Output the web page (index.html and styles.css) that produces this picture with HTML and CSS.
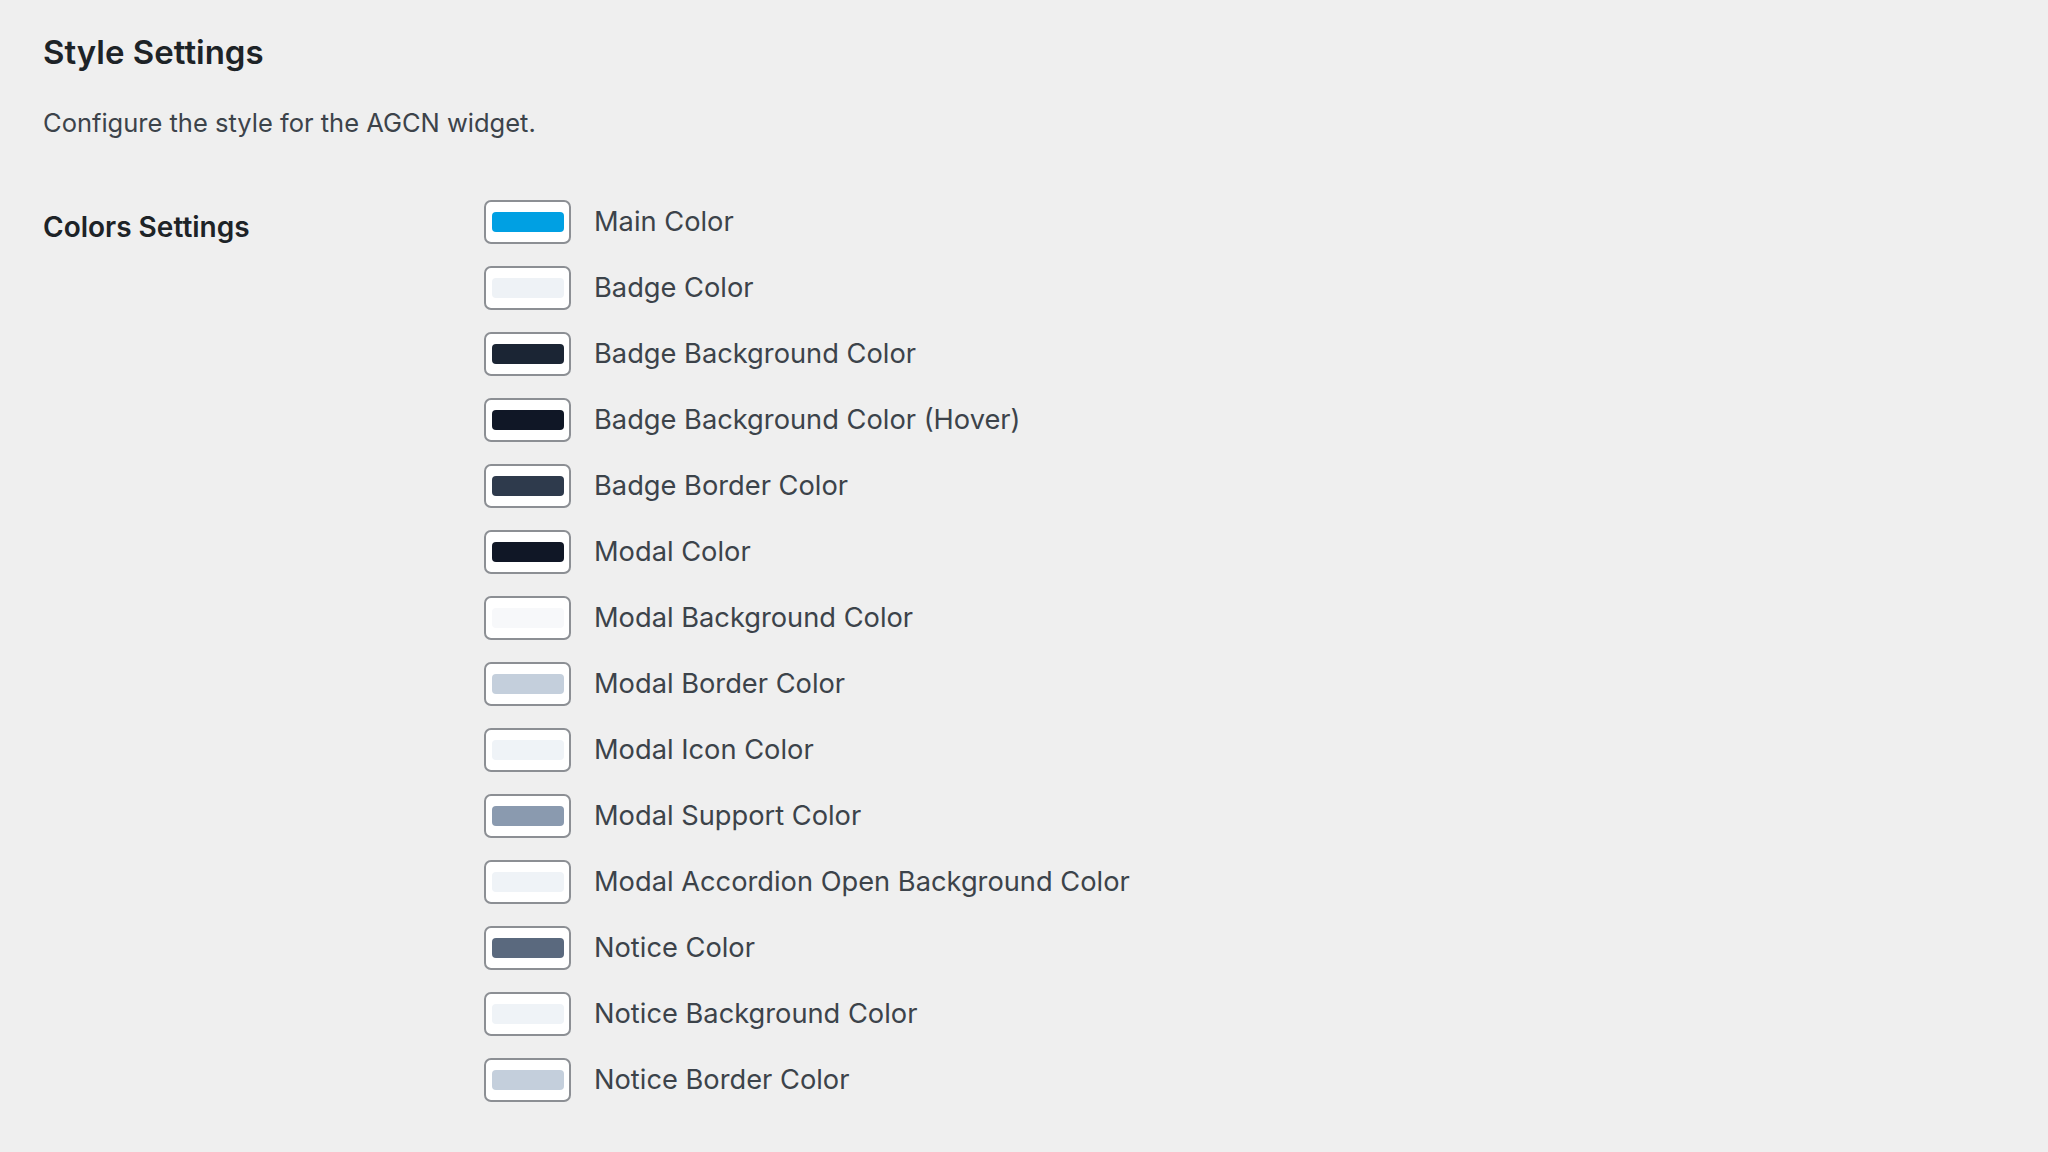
FILE: index.html
```html
<!DOCTYPE html>
<html lang="en">
<head>
<meta charset="utf-8">
<title>Style Settings</title>
<link rel="stylesheet" href="styles.css">
</head>
<body>
<div class="wrap">
  <h2 class="title">Style Settings</h2>
  <p class="desc">Configure the style for the AGCN widget.</p>
  <div class="form-row">
    <div class="th">Colors Settings</div>
    <div class="fields">
      <div class="field"><span class="picker"><span class="swatch" style="background:#00a0e3"></span></span><span class="label">Main Color</span></div>
      <div class="field"><span class="picker"><span class="swatch" style="background:#eef2f6"></span></span><span class="label">Badge Color</span></div>
      <div class="field"><span class="picker"><span class="swatch" style="background:#1b2534"></span></span><span class="label">Badge Background Color</span></div>
      <div class="field"><span class="picker"><span class="swatch" style="background:#101726"></span></span><span class="label">Badge Background Color (Hover)</span></div>
      <div class="field"><span class="picker"><span class="swatch" style="background:#2e3a4c"></span></span><span class="label">Badge Border Color</span></div>
      <div class="field"><span class="picker"><span class="swatch" style="background:#101726"></span></span><span class="label">Modal Color</span></div>
      <div class="field"><span class="picker"><span class="swatch" style="background:#f7f8fa"></span></span><span class="label">Modal Background Color</span></div>
      <div class="field"><span class="picker"><span class="swatch" style="background:#c4cfdc"></span></span><span class="label">Modal Border Color</span></div>
      <div class="field"><span class="picker"><span class="swatch" style="background:#eff3f7"></span></span><span class="label">Modal Icon Color</span></div>
      <div class="field"><span class="picker"><span class="swatch" style="background:#8a9aaf"></span></span><span class="label">Modal Support Color</span></div>
      <div class="field"><span class="picker"><span class="swatch" style="background:#eff3f7"></span></span><span class="label">Modal Accordion Open Background Color</span></div>
      <div class="field"><span class="picker"><span class="swatch" style="background:#5a697e"></span></span><span class="label">Notice Color</span></div>
      <div class="field"><span class="picker"><span class="swatch" style="background:#eff3f7"></span></span><span class="label">Notice Background Color</span></div>
      <div class="field"><span class="picker"><span class="swatch" style="background:#c4cfdc"></span></span><span class="label">Notice Border Color</span></div>
    </div>
  </div>
</div>
</body>
</html>
```

FILE: styles.css
```css
html, body {
  margin: 0;
  padding: 0;
  background: #efefef;
}

body {
  font-family: Inter, "Noto Sans", "Liberation Sans", sans-serif;
  color: #3c434a;
  -webkit-font-smoothing: antialiased;
}

.wrap {
  padding: 30px 0 0 43px;
}

.title {
  margin: 0;
  font-size: 33px;
  line-height: 44px;
  font-weight: 600;
  color: #1d2327;
}

.desc {
  margin: 29px 0 0;
  font-size: 25.5px;
  line-height: 40px;
  color: #3c434a;
}

.form-row {
  display: flex;
  align-items: flex-start;
  margin-top: 57px;
}

.th {
  width: 441px;
  flex: none;
  margin-top: 6px;
  font-size: 28px;
  line-height: 42px;
  font-weight: 600;
  color: #1d2327;
}

.fields {
  display: flex;
  flex-direction: column;
  gap: 22px;
}

.field {
  display: flex;
  align-items: center;
  height: 44px;
  gap: 23px;
}

.picker {
  box-sizing: border-box;
  display: flex;
  align-items: center;
  justify-content: center;
  width: 87px;
  height: 44px;
  border: 2px solid #8c8f94;
  border-radius: 7px;
  background: #ffffff;
}

.swatch {
  display: block;
  width: 72px;
  height: 20px;
  border-radius: 4px;
}

.label {
  font-size: 27.25px;
  line-height: 44px;
  color: #3c434a;
}
```
